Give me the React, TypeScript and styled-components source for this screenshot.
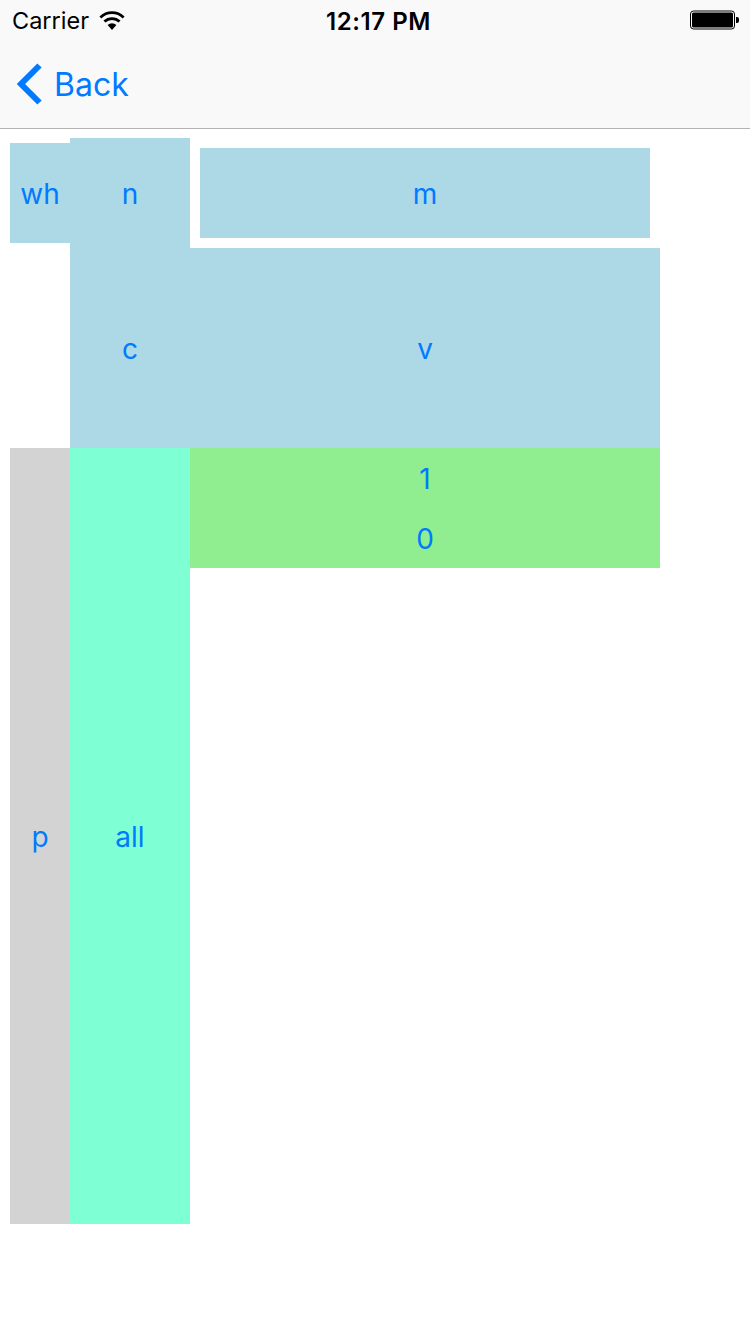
import React from "react";
import styled, { createGlobalStyle } from "styled-components";

const GlobalStyle = createGlobalStyle`
  html, body {
    margin: 0;
    padding: 0;
    background: #fff;
    font-family: "Inter", "Liberation Sans", sans-serif;
  }
`;

const Screen = styled.div`
  width: 750px;
  height: 1334px;
  overflow: hidden;
  background: #fff;
`;

const Header = styled.header`
  height: 128px;
  background: #f9f9f9;
  border-bottom: 1px solid #b2b2b2;
`;

const StatusBar = styled.div`
  position: relative;
  height: 40px;
  display: flex;
  align-items: center;
  justify-content: space-between;
  padding: 0 10px 0 12px;
  color: #000;
`;

const Carrier = styled.div`
  display: flex;
  align-items: center;
  gap: 10px;
  font-size: 23.5px;
  padding-top: 1px;
`;

const Time = styled.div`
  position: absolute;
  left: 7px;
  right: 0;
  text-align: center;
  font-size: 24px;
  font-weight: 600;
  letter-spacing: 0.6px;
  padding-top: 2px;
`;

const NavBar = styled.nav`
  height: 88px;
  display: flex;
  align-items: center;
  gap: 11px;
  padding-left: 16px;
  color: #007aff;
  font-size: 32px;
`;

const Board = styled.main`
  display: grid;
  grid-template-columns: 60px 120px 470px;
  grid-template-rows: 119px 200px 776px;
  margin-left: 10px;
`;

const Cell = styled.div<{ $bg: string }>`
  display: flex;
  align-items: center;
  justify-content: center;
  padding-top: 2px;
  box-sizing: border-box;
  background: ${({ $bg }) => $bg};
  color: #007aff;
  font-size: 28px;
`;

const WhCell = styled(Cell)`
  height: 100px;
  margin-top: 14px;
`;

const NCell = styled(Cell)`
  height: 110px;
  margin-top: 9px;
`;

const MCell = styled(Cell)`
  height: 90px;
  margin: 19px 10px 0;
`;

const CCell = styled(Cell)`
  grid-column: 2;
`;

const Digits = styled(Cell)`
  height: 120px;
  flex-direction: column;
`;

const Digit = styled.div`
  height: 60px;
  line-height: 60px;
`;

const LIGHT_BLUE = "#add8e6";

export default function App() {
  return (
    <Screen>
      <GlobalStyle />
      <Header>
        <StatusBar>
          <Carrier>
            Carrier
            <svg width="26" height="19" viewBox="0 0 26 19">
              <path d="M13 19 L8.6 14 A6.6 6.6 0 0 1 17.4 14 Z" fill="#000" />
              <path d="M5.4 10.6 A11 11 0 0 1 20.6 10.6" fill="none" stroke="#000" strokeWidth="2.8" />
              <path d="M1.4 6.4 A16.6 16.6 0 0 1 24.6 6.4" fill="none" stroke="#000" strokeWidth="2.8" />
            </svg>
          </Carrier>
          <Time>12:17 PM</Time>
          <svg width="50" height="20" viewBox="0 0 50 20">
            <rect x="0.5" y="1" width="44" height="18" rx="3" fill="none" stroke="#000" strokeWidth="1" />
            <rect x="2" y="2.5" width="41" height="15" rx="1.5" fill="#000" />
            <path d="M46 7 h1 a2 2 0 0 1 2 2 v2 a2 2 0 0 1 -2 2 h-1 Z" fill="#000" />
          </svg>
        </StatusBar>
        <NavBar>
          <svg width="27" height="42" viewBox="0 0 27 42">
            <path d="M23.5 2.5 L5 21 L23.5 39.5" fill="none" stroke="#007aff" strokeWidth="6" />
          </svg>
          Back
        </NavBar>
      </Header>
      <Board>
        <WhCell $bg={LIGHT_BLUE}>wh</WhCell>
        <NCell $bg={LIGHT_BLUE}>n</NCell>
        <MCell $bg={LIGHT_BLUE}>m</MCell>
        <CCell $bg={LIGHT_BLUE}>c</CCell>
        <Cell $bg={LIGHT_BLUE}>v</Cell>
        <Cell $bg="#d3d3d3">p</Cell>
        <Cell $bg="#7fffd4">all</Cell>
        <Digits $bg="#90ee90">
          <Digit>1</Digit>
          <Digit>0</Digit>
        </Digits>
      </Board>
    </Screen>
  );
}
